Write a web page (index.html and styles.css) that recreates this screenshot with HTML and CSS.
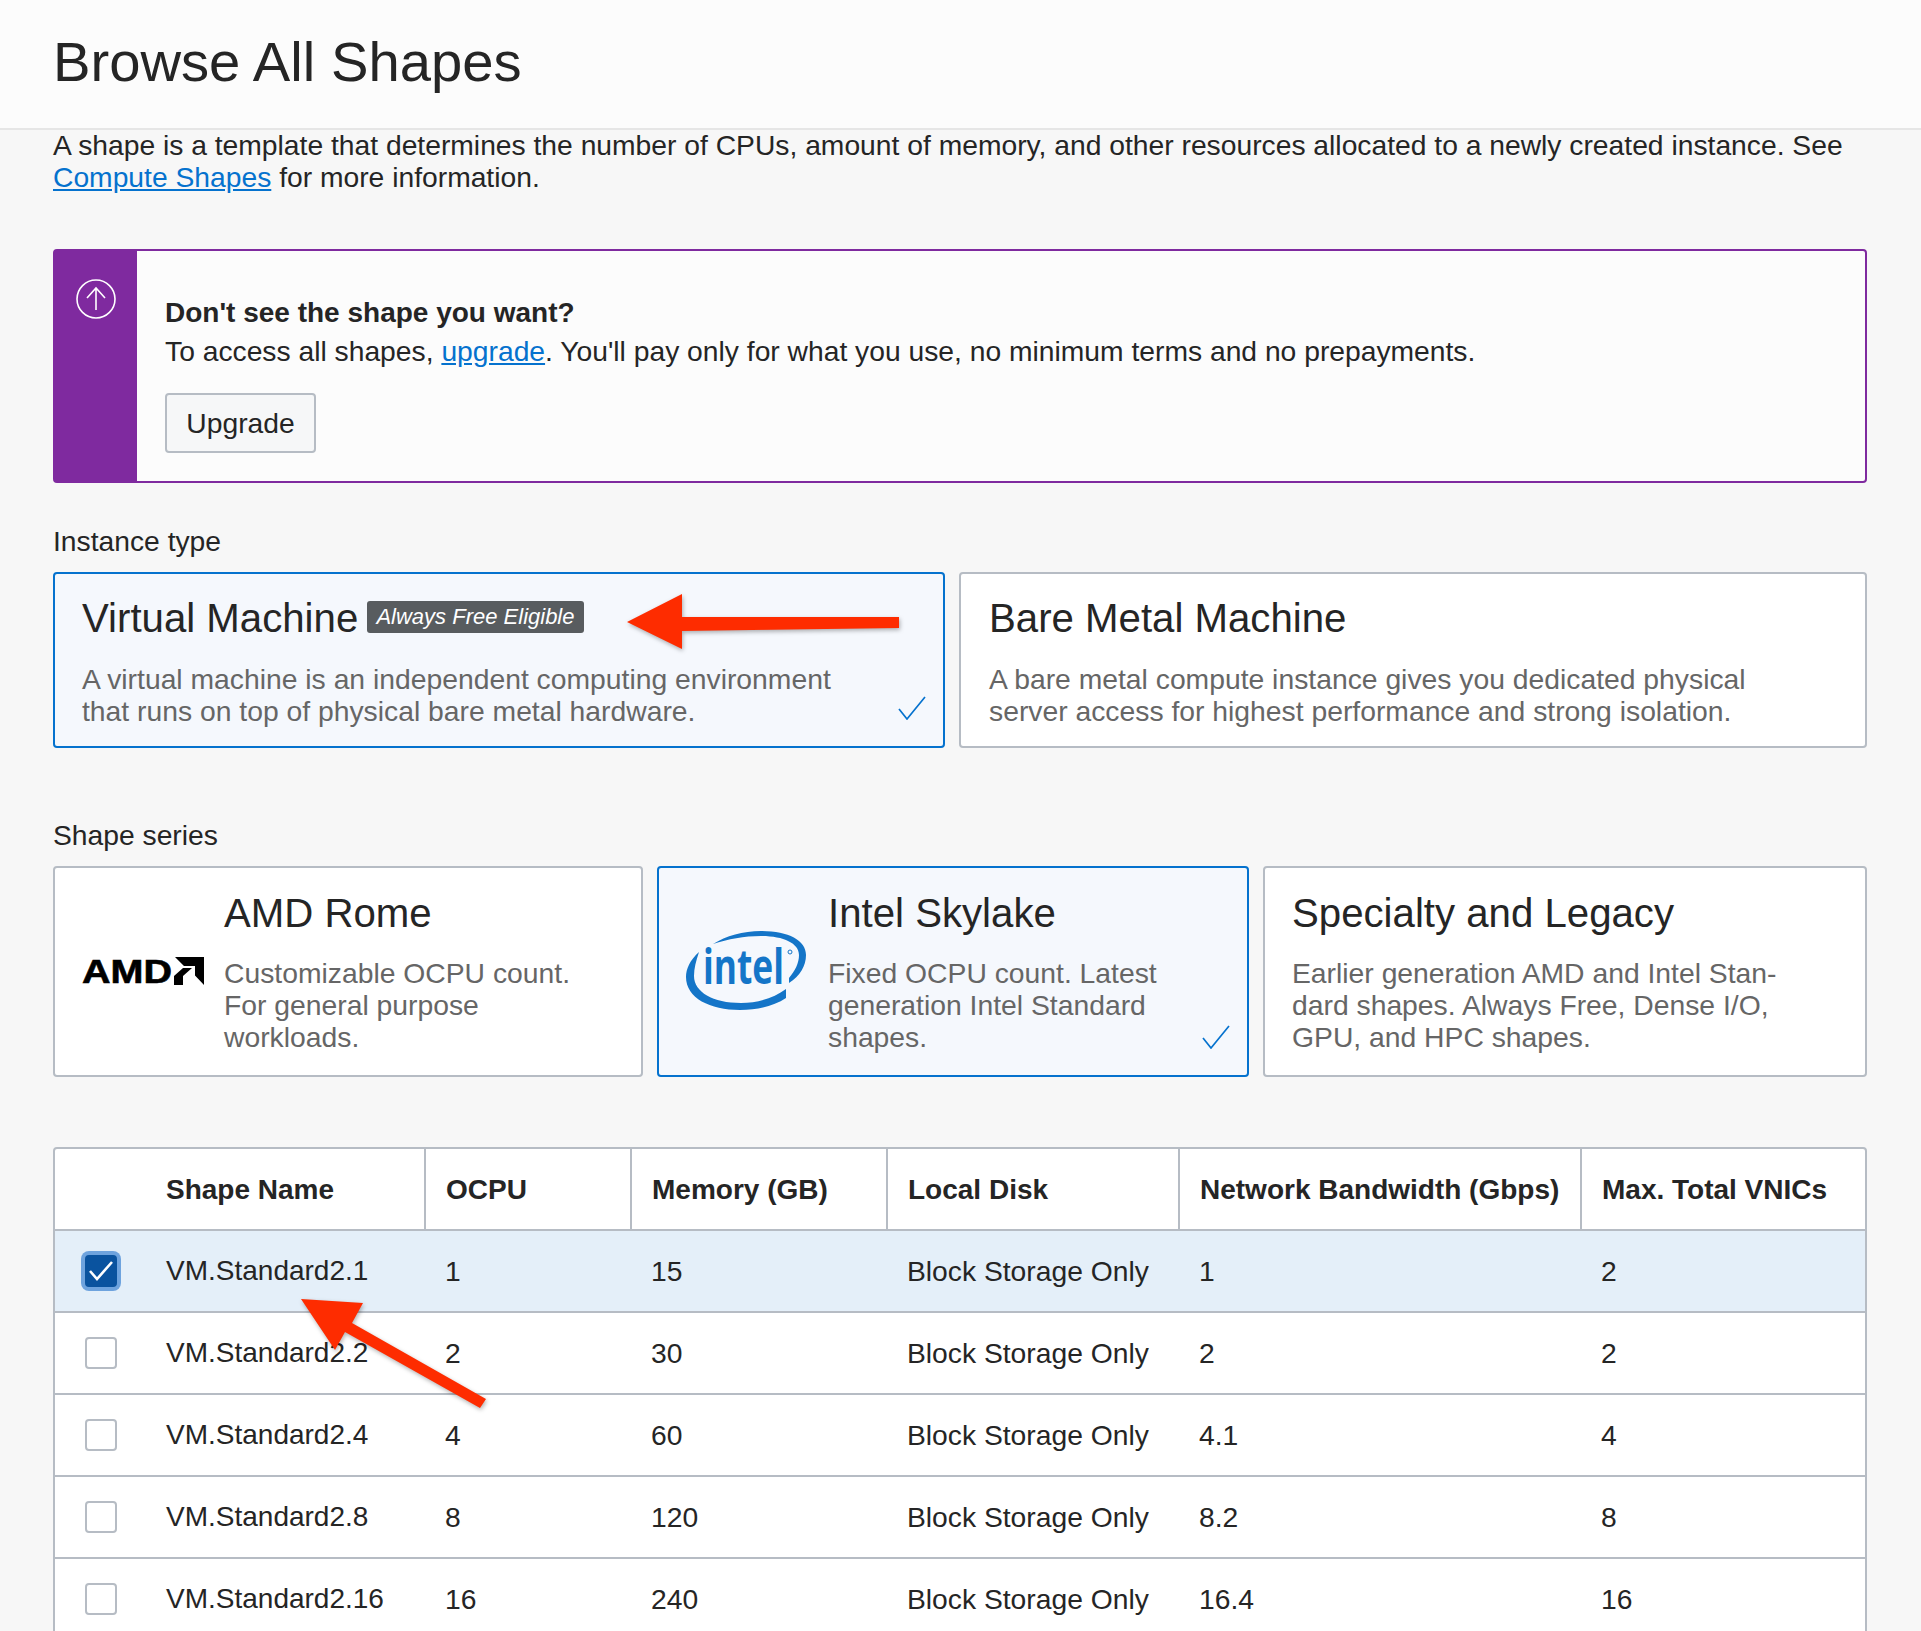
FILE: index.html
```html
<!DOCTYPE html>
<html lang="en">
<head>
    <meta charset="UTF-8">
    <title>Browse All Shapes</title>
    <link rel="stylesheet" href="styles.css">
</head>
<body>
    <header class="page-header">
        <h1>Browse All Shapes</h1>
    </header>

    <main class="content">
        <p class="intro">A shape is a template that determines the number of CPUs, amount of memory, and other resources allocated to a newly created instance. See<br><a href="#">Compute Shapes</a> for more information.</p>

        <section class="callout">
            <div class="callout-side">
                <svg class="callout-icon" viewBox="0 0 40 40" width="40" height="40">
                    <circle cx="20" cy="20" r="19" fill="none" stroke="#fff" stroke-width="1.6"/>
                    <path d="M20 31V9M11 19l9-10 9 10" fill="none" stroke="#fff" stroke-width="1.6"/>
                </svg>
            </div>
            <div class="callout-body">
                <h3>Don't see the shape you want?</h3>
                <p>To access all shapes, <a href="#">upgrade</a>. You'll pay only for what you use, no minimum terms and no prepayments.</p>
                <button type="button" class="btn">Upgrade</button>
            </div>
        </section>

        <div class="field-label label-instance">Instance type</div>
        <div class="cards cards-instance">
            <div class="card selected">
                <div class="card-title">Virtual Machine <span class="badge">Always Free Eligible</span></div>
                <p class="card-desc">A virtual machine is an independent computing environment<br>that runs on top of physical bare metal hardware.</p>
                <svg class="tick" viewBox="0 0 28 24" width="28" height="24"><path d="M1 13l8 10L27 1" fill="none" stroke="#0572ce" stroke-width="1.7"/></svg>
            </div>
            <div class="card">
                <div class="card-title">Bare Metal Machine</div>
                <p class="card-desc">A bare metal compute instance gives you dedicated physical<br>server access for highest performance and strong isolation.</p>
            </div>
        </div>

        <div class="field-label label-series">Shape series</div>
        <div class="cards cards-series">
            <div class="card card-logo">
                <div class="logo">
                    <svg viewBox="0 0 122 28" width="122" height="28">
                        <text x="0" y="26" class="amd-text" textLength="90" lengthAdjust="spacingAndGlyphs">AMD</text>
                        <path d="M93 0h29v28l-9-9.500V9h-11zM92 19l9-8h9l-9 8v9h-9z" fill="#000"/>
                    </svg>
                </div>
                <div class="card-text">
                    <div class="card-title">AMD Rome</div>
                    <p class="card-desc">Customizable OCPU count.<br>For general purpose<br>workloads.</p>
                </div>
            </div>
            <div class="card card-logo selected">
                <div class="logo">
                    <svg viewBox="0 0 120 79" width="120" height="79">
                        <path d="M13 21C4 29 0 38 0 46c0 21 24 33 54 33 18 0 34-4 46-12v-9C88 67 72 72 55 72 27 72 8 61 8 45c0-8 2-15 5-24z" fill="#1475c8"/>
                        <path d="M27 13C40 5 57 0 75 0c27 0 45 9 45 24 0 11-6 21-17 28v-5c6-7 10-15 10-23C113 12 97 5 75 5 58 5 42 8 27 13z" fill="#1475c8"/>
                        <text x="17" y="53" class="intel-text" textLength="81" lengthAdjust="spacingAndGlyphs">intel</text>
                        <circle cx="104" cy="21" r="2" fill="none" stroke="#1475c8"/>
                    </svg>
                </div>
                <div class="card-text">
                    <div class="card-title">Intel Skylake</div>
                    <p class="card-desc">Fixed OCPU count. Latest<br>generation Intel Standard<br>shapes.</p>
                </div>
                <svg class="tick" viewBox="0 0 28 24" width="28" height="24"><path d="M1 13l8 10L27 1" fill="none" stroke="#0572ce" stroke-width="1.7"/></svg>
            </div>
            <div class="card">
                <div class="card-title">Specialty and Legacy</div>
                <p class="card-desc">Earlier generation AMD and Intel Stan-<br>dard shapes. Always Free, Dense I/O,<br>GPU, and HPC shapes.</p>
            </div>
        </div>

        <div class="table-wrap">
            <table class="shapes">
                <colgroup>
                    <col class="col-check"><col class="col-name"><col class="col-ocpu"><col class="col-mem"><col class="col-disk"><col class="col-net"><col>
                </colgroup>
                <thead>
                    <tr>
                        <th></th>
                        <th class="name">Shape Name</th>
                        <th class="div">OCPU</th>
                        <th class="div">Memory (GB)</th>
                        <th class="div">Local Disk</th>
                        <th class="div">Network Bandwidth (Gbps)</th>
                        <th class="div">Max. Total VNICs</th>
                    </tr>
                </thead>
                <tbody>
                    <tr class="row-on">
                        <td class="check"><span class="box on"><svg viewBox="0 0 24 20" width="24" height="20"><path d="M1 10l7 8L23 1" fill="none" stroke="#fff" stroke-width="2.6"/></svg></span></td>
                        <td class="name">VM.Standard2.1</td><td>1</td><td>15</td><td>Block Storage Only</td><td>1</td><td>2</td>
                    </tr>
                    <tr>
                        <td class="check"><span class="box"></span></td>
                        <td class="name">VM.Standard2.2</td><td>2</td><td>30</td><td>Block Storage Only</td><td>2</td><td>2</td>
                    </tr>
                    <tr>
                        <td class="check"><span class="box"></span></td>
                        <td class="name">VM.Standard2.4</td><td>4</td><td>60</td><td>Block Storage Only</td><td>4.1</td><td>4</td>
                    </tr>
                    <tr>
                        <td class="check"><span class="box"></span></td>
                        <td class="name">VM.Standard2.8</td><td>8</td><td>120</td><td>Block Storage Only</td><td>8.2</td><td>8</td>
                    </tr>
                    <tr>
                        <td class="check"><span class="box"></span></td>
                        <td class="name">VM.Standard2.16</td><td>16</td><td>240</td><td>Block Storage Only</td><td>16.4</td><td>16</td>
                    </tr>
                </tbody>
            </table>
        </div>
    </main>

    <!-- red annotation arrows drawn over the screenshot -->
    <svg class="arrows" viewBox="0 0 1921 1631" width="1921" height="1631">
        <polygon points="627,622 682,594 682,617 899,617 899,628 682,631 682,649" fill="#fe2c00"/>
        <polygon points="301,1299 363,1303 352,1323 486,1399 480,1408 345,1332 335,1350" fill="#fe2c00"/>
    </svg>
</body>
</html>
```

FILE: styles.css
```css
html, body {
    height: 1631px;
    overflow: hidden;
}

body {
    position: relative;
    margin: 0;
    font-family: "Liberation Sans", Arial, sans-serif;
    font-size: 28.25px;
    line-height: 32px;
    color: #252525;
    background-color: #f7f7f7;
}

a {
    color: #0572ce;
    text-decoration: underline;
}

.page-header {
    height: 128px;
    padding-left: 53px;
    background-color: #fcfcfc;
    border-bottom: 2px solid #e6e6e6;
}

.page-header h1 {
    margin: 0;
    font-size: 56.2px;
    font-weight: normal;
    line-height: 124px;
}

.content {
    padding: 0 54px 0 53px;
}

.intro {
    margin: -1px 0 0;
}

.callout {
    display: flex;
    height: 234px;
    margin-top: 56px;
    box-sizing: border-box;
    border: 2px solid #7f2a9f;
    border-radius: 4px;
    background-color: #fcfcfc;
}

.callout-side {
    width: 82px;
    background-color: #7f2a9f;
    text-align: center;
}

.callout-icon {
    margin-top: 28px;
}

.callout-body {
    padding: 46px 0 0 28px;
}

.callout-body h3 {
    margin: 0;
    font-size: 28px;
    line-height: 32px;
}

.callout-body p {
    margin: 6px 0 26px;
}

.btn {
    display: block;
    width: 151px;
    height: 60px;
    padding: 0;
    font: inherit;
    color: #252525;
    background-color: #f6f7f8;
    border: 2px solid #b6bcc4;
    border-radius: 4px;
}

.field-label {
    color: #252525;
}

.label-instance {
    margin-top: 42px;
}

.label-series {
    margin-top: 71px;
}

.cards {
    display: grid;
    column-gap: 14px;
    margin-top: 15px;
}

.cards-instance {
    grid-template-columns: 892px 1fr;
    height: 176px;
}

.cards-series {
    grid-template-columns: 590px 592px 1fr;
    height: 211px;
}

.card {
    position: relative;
    box-sizing: border-box;
    padding: 25px 27px 0;
    background-color: #fff;
    border: 2px solid #b6bcc4;
    border-radius: 4px;
}

.card.selected {
    background-color: #f5f8fd;
    border-color: #0572ce;
}

.cards-instance .card + .card {
    padding-left: 28px;
}

.cards-series .card {
    padding-top: 26px;
}

.cards-series .card-logo {
    display: flex;
    align-items: center;
    padding-top: 0;
}

.card-text {
    align-self: flex-start;
    padding-top: 26px;
}

.logo {
    flex: none;
    width: 142px;
    margin-bottom: 2px;
    line-height: 0;
}

.logo svg {
    overflow: visible;
}

.card-title {
    font-size: 40.2px;
    line-height: 40px;
}

.card-desc {
    margin: 24px 0 0;
    font-size: 28.3px;
    color: #666;
}

.cards-series .card-desc {
    margin-top: 23px;
}

.badge {
    display: inline-block;
    margin-left: -2px;
    padding: 0 9px;
    font-size: 22px;
    font-style: italic;
    line-height: 32px;
    color: #fff;
    background-color: #585c5f;
    border-radius: 3px;
    vertical-align: 8px;
}

.tick {
    position: absolute;
    right: 17px;
    bottom: 26px;
}

.amd-text {
    font-family: "Liberation Sans", Arial, sans-serif;
    font-size: 33px;
    font-weight: bold;
    fill: #000;
    stroke: #000;
    stroke-width: 0.6px;
}

.intel-text {
    font-family: "Open Sans", sans-serif;
    font-size: 48px;
    font-weight: 700;
    fill: #1475c8;
}

.table-wrap {
    margin-top: 70px;
    background-color: #fff;
    border: 2px solid #b6bcc4;
    border-radius: 4px;
}

.shapes {
    width: 100%;
    table-layout: fixed;
    border-collapse: collapse;
}

.col-check { width: 111px; }
.col-name { width: 259px; }
.col-ocpu { width: 206px; }
.col-mem { width: 256px; }
.col-disk { width: 292px; }
.col-net { width: 402px; }

.shapes th,
.shapes td {
    height: 80px;
    padding: 0 0 0 20px;
    text-align: left;
    border-bottom: 2px solid #b6bcc4;
}

.shapes th {
    height: 78px;
    padding-top: 2px;
    font-size: 28px;
    font-weight: bold;
}

.shapes th.div {
    border-left: 2px solid #b6bcc4;
}

.shapes th.name,
.shapes td.name {
    padding-left: 0;
    font-size: 28px;
}

.row-on td {
    background-color: #e4eff9;
}

.shapes td.check {
    padding: 0 0 0 30px;
}

.box {
    display: flex;
    align-items: center;
    justify-content: center;
    box-sizing: border-box;
    width: 32px;
    height: 32px;
    background-color: #fff;
    border: 2px solid #b6bcc4;
    border-radius: 4px;
}

.box.on {
    background-color: #0a539f;
    border-color: #0a539f;
    box-shadow: 0 0 0 4px #6ea3de;
}

.arrows {
    position: absolute;
    top: 0;
    left: 0;
    pointer-events: none;
    filter: drop-shadow(1px 2px 2px rgba(0, 0, 0, 0.3));
}
```
